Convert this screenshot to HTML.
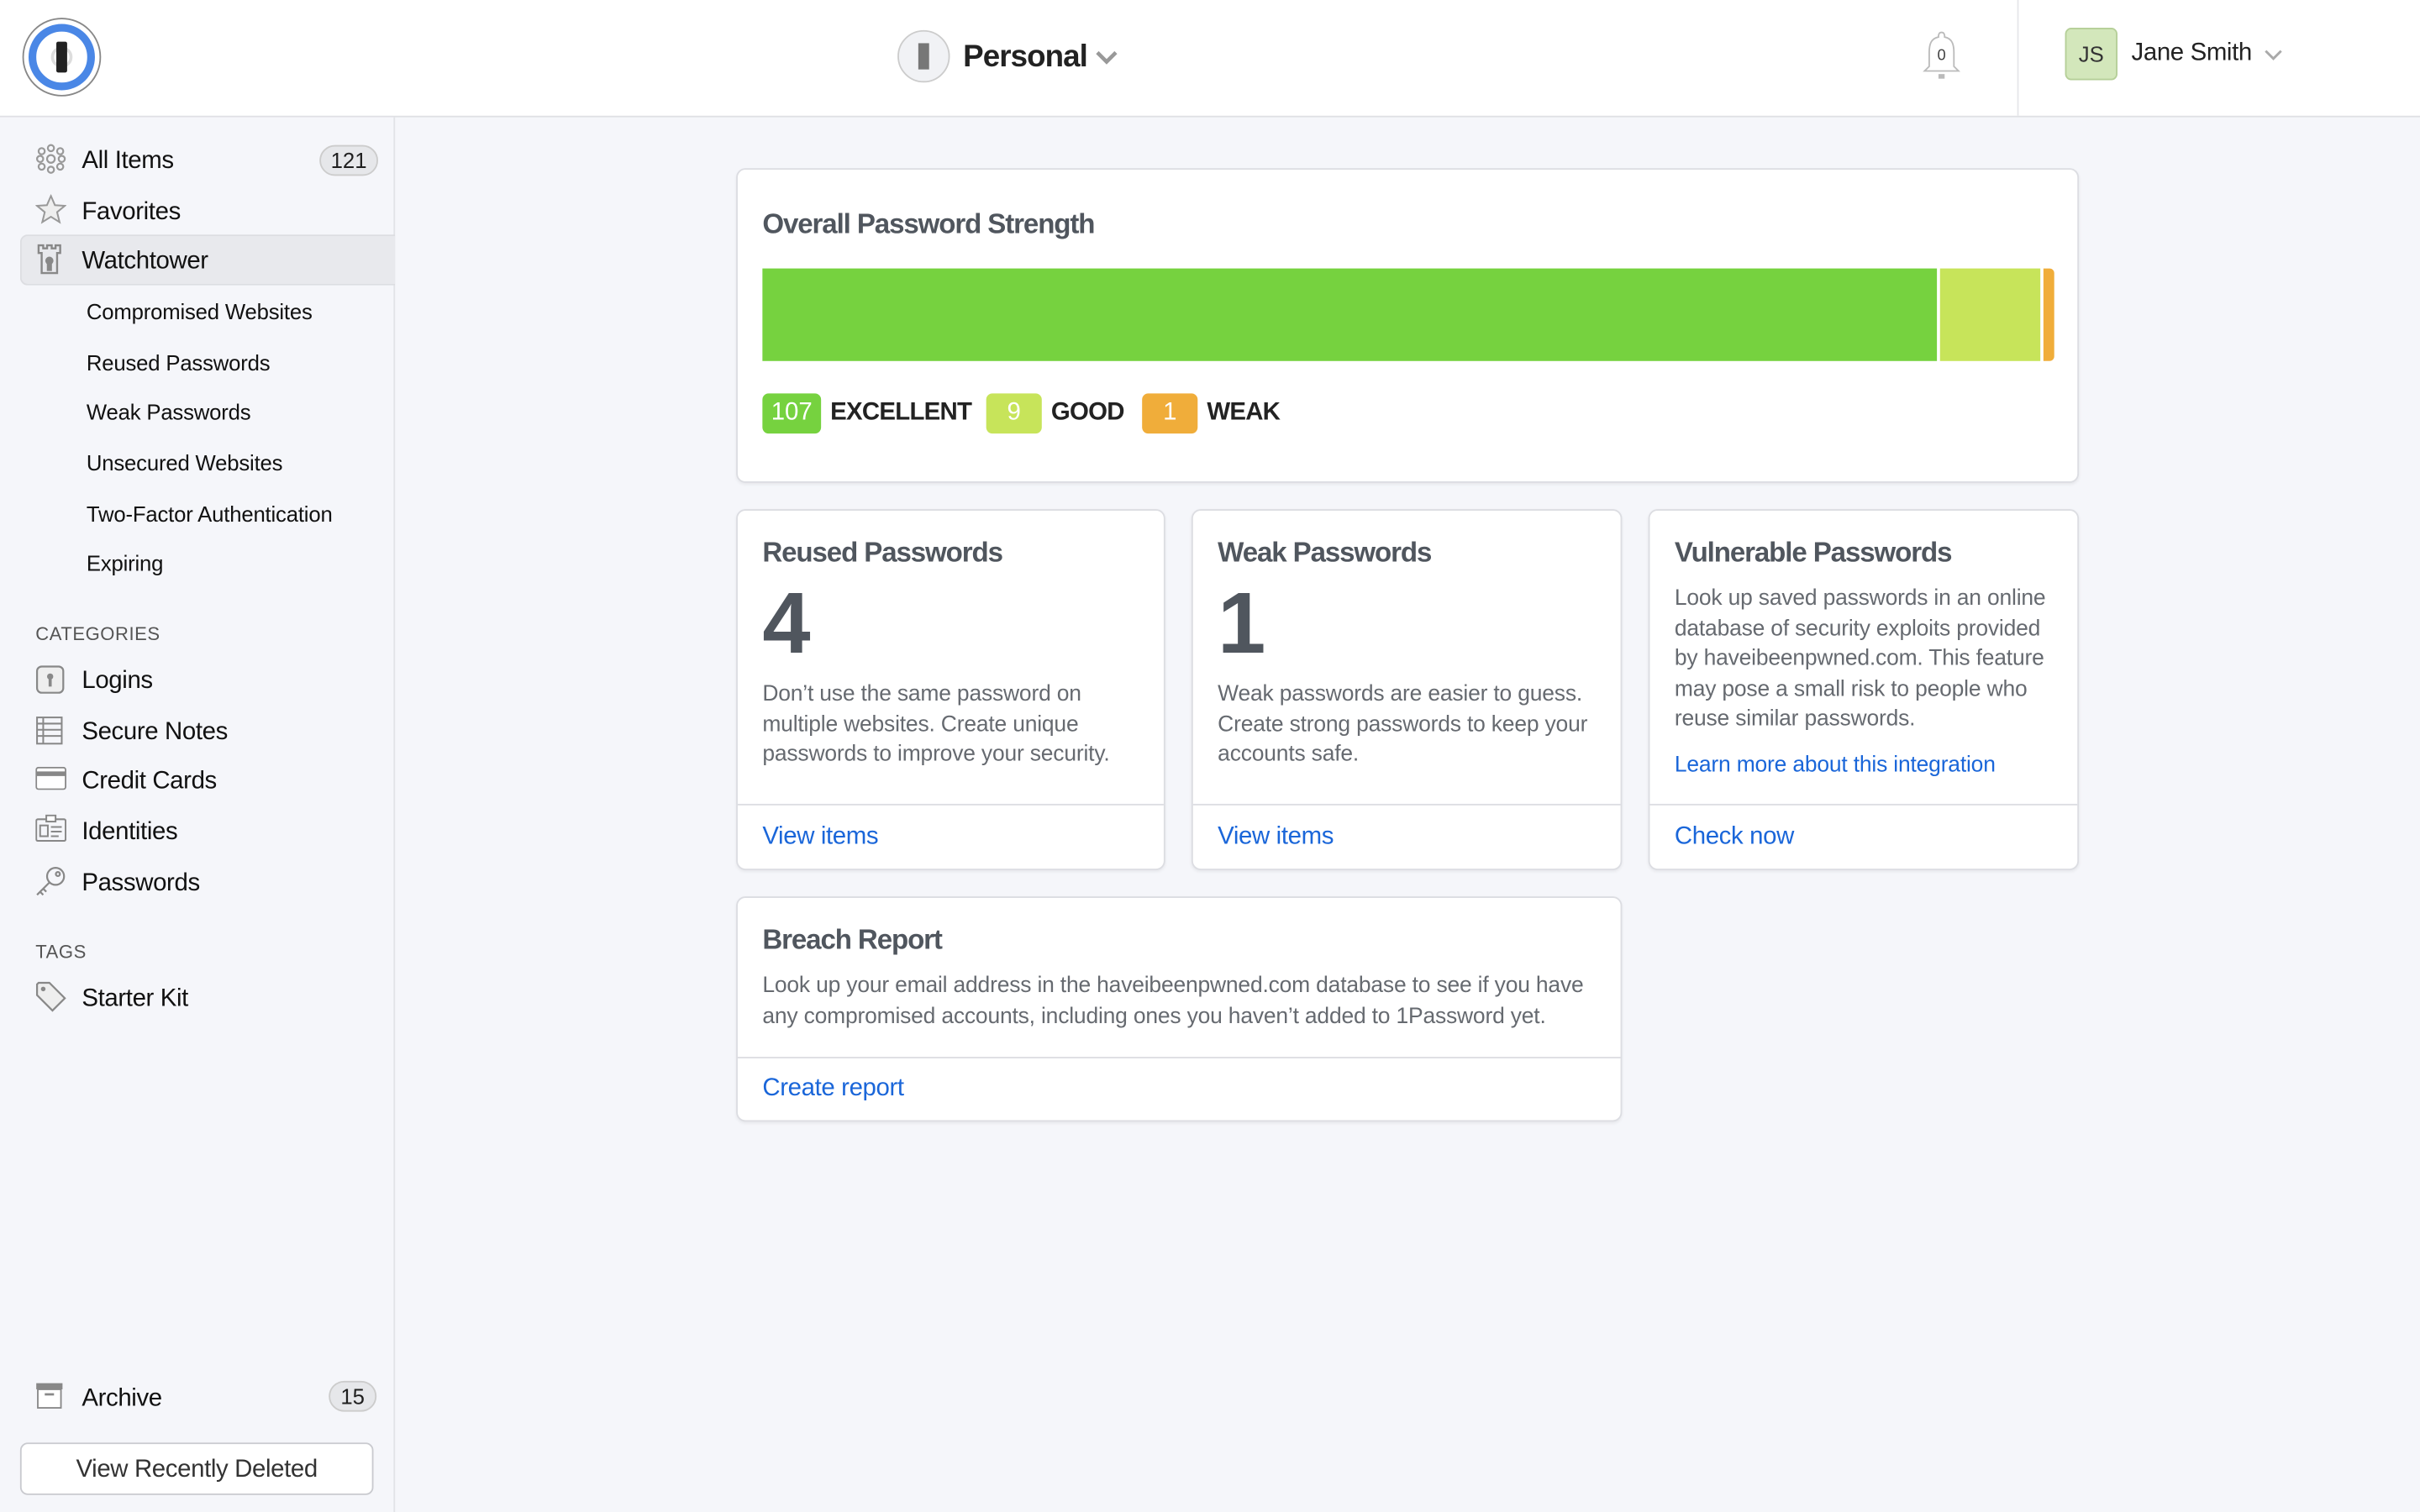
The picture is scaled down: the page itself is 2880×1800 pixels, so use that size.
<!DOCTYPE html>
<html><head><meta charset="utf-8">
<style>
*{box-sizing:border-box;margin:0;padding:0}
html,body{width:2880px;height:1800px;overflow:hidden;background:#f5f6fa}
#w{width:1568px;height:980px;transform:scale(1.836735);transform-origin:0 0;position:relative;font-family:"Liberation Sans",sans-serif;color:#1f1f1f;background:#f5f6fa}
.abs{position:absolute}
#hdr{left:0;top:0;width:1568px;height:76px;background:#fff;border-bottom:1px solid #dfe0e4}
#side{left:0;top:76px;width:256px;height:904px;border-right:1px solid #e2e3e7;background:#f5f6fa}
.it{position:absolute;left:53px;font-size:16px;color:#111;letter-spacing:-.2px}
.sub{position:absolute;left:56px;font-size:14px;color:#111;letter-spacing:-.1px}
.ic{position:absolute;left:23px}
.cap{position:absolute;left:23px;font-size:12px;color:#555;letter-spacing:.3px}
.card{position:absolute;background:#fff;border:1px solid #dcdde2;border-radius:6px;box-shadow:0 1px 2px rgba(0,0,0,.06)}
.ct{position:absolute;left:16px;font-size:18px;font-weight:bold;color:#50565e;letter-spacing:-.6px}
.tx{position:absolute;left:16px;font-size:14.4px;line-height:19.6px;color:#666a70;letter-spacing:-.1px}
.lk{position:absolute;left:16px;font-size:16px;color:#1a66d9;letter-spacing:-.2px}
.dv{position:absolute;left:0;right:0;height:1px;background:#dcdde2}
.big{position:absolute;left:16px;top:40px;font-size:56px;font-weight:bold;color:#50565e}
.bd{position:absolute;top:255px;height:26px;border-radius:4px;color:#fff;font-size:16px;text-align:center;line-height:26px}
.bl{position:absolute;top:259px;font-size:16px;color:#222;font-weight:bold;letter-spacing:-.4px}
</style></head><body><div id="w">
<div id="hdr" class="abs">
 <svg class="abs" style="left:14px;top:11px" width="52" height="52" viewBox="0 0 52 52"><circle cx="26" cy="26" r="25" fill="#fff" stroke="#888" stroke-width="1"/><circle cx="26" cy="26" r="19" fill="#fff" stroke="#4a87e6" stroke-width="5"/><circle cx="26" cy="26" r="6" fill="none" stroke="#ddd" stroke-width="2"/><rect x="22.5" y="16" width="7" height="20" rx="1.2" fill="#222"/></svg>
 <svg class="abs" style="left:581px;top:19px" width="35" height="35" viewBox="0 0 35 35"><circle cx="17.5" cy="17.5" r="16.5" fill="#f1f2f5" stroke="#ccc"/><rect x="14" y="9" width="7" height="17" fill="#777"/></svg>
 <div class="abs" style="left:624px;top:26px;font-size:20px;font-weight:bold;color:#222;letter-spacing:-.5px">Personal</div>
 <svg class="abs" style="left:710px;top:32px" width="14" height="10"><path d="M1 2 L7 8 L13 2" fill="none" stroke="#999" stroke-width="2.5"/></svg>
 <svg class="abs" style="left:1244px;top:19px" width="28" height="34" viewBox="0 0 28 34"><path d="M14 2 C12 2 12 4 12 5 C7 6 6 10 6 15 L6 24 L3 27 L25 27 L22 24 L22 15 C22 10 21 6 16 5 C16 4 16 2 14 2Z" fill="#fff" stroke="#bbb"/><rect x="12" y="29" width="4" height="3" fill="#bbb"/><text x="14" y="20" font-size="10" text-anchor="middle" fill="#444" font-family="Liberation Sans">0</text></svg>
 <div class="abs" style="left:1307px;top:0;width:1px;height:75px;background:#e6e7ea"></div>
 <div class="abs" style="left:1338px;top:18px;width:34px;height:34px;border-radius:4px;background:#d3e7bb;border:1px solid #b5cf98;font-size:14px;text-align:center;line-height:32px;color:#333">JS</div>
 <div class="abs" style="left:1381px;top:26px;font-size:16px;color:#222;letter-spacing:-.2px">Jane Smith</div>
 <svg class="abs" style="left:1467px;top:32px" width="12" height="8"><path d="M1 1 L6 6 L11 1" fill="none" stroke="#aaa" stroke-width="1.6"/></svg>
</div>
<div id="side" class="abs"></div>
<div class="abs" style="left:13px;top:152px;width:243px;height:33px;background:#e8e9ed;border:1px solid #dcdde1;border-right:none;border-radius:5px 0 0 5px"></div>
<svg class="ic" style="top:93px" width="20" height="20" viewBox="0 0 20 20" fill="none" stroke="#999" stroke-width="1.2"><circle cx="10" cy="3" r="2"/><circle cx="4" cy="5" r="2"/><circle cx="16" cy="5" r="2"/><circle cx="3" cy="10" r="2"/><circle cx="10" cy="10" r="2.5"/><circle cx="17" cy="10" r="2"/><circle cx="4" cy="15" r="2"/><circle cx="16" cy="15" r="2"/><circle cx="10" cy="17" r="2"/></svg>
<div class="it" style="top:96px">All Items</div>
<div class="abs" style="left:207px;top:94px;width:38px;height:20px;border-radius:10px;background:#e6e7ea;border:1px solid #ccc;font-size:14px;text-align:center;line-height:18px">121</div>
<svg class="ic" style="top:126px" width="20" height="20" viewBox="0 0 20 20"><path d="M10 1 L12.6 7 L19 7.4 L14 11.5 L15.6 18 L10 14.5 L4.4 18 L6 11.5 L1 7.4 L7.4 7Z" fill="#eee" stroke="#999" stroke-width="1.1"/></svg>
<div class="it" style="top:129px">Favorites</div>
<svg class="ic" style="top:158px;left:24px" width="16" height="20" viewBox="0 0 16 20" fill="none" stroke="#888" stroke-width="1.3"><path d="M1 1 H4 V3 H6.5 V1 H9.5 V3 H12 V1 H15 V6 H13 V19 H3 V6 H1Z"/><circle cx="8" cy="11" r="2" fill="#888"/><rect x="7" y="12" width="2" height="5" fill="#888"/></svg>
<div class="it" style="top:161px">Watchtower</div>
<div class="sub" style="top:194px">Compromised Websites</div>
<div class="sub" style="top:227px">Reused Passwords</div>
<div class="sub" style="top:259px">Weak Passwords</div>
<div class="sub" style="top:292px">Unsecured Websites</div>
<div class="sub" style="top:325px">Two-Factor Authentication</div>
<div class="sub" style="top:357px">Expiring</div>
<div class="cap" style="top:404px">CATEGORIES</div>
<svg class="ic" style="top:431px" width="19" height="19" viewBox="0 0 19 19"><rect x="1" y="1" width="17" height="17" rx="3" fill="#eee" stroke="#888" stroke-width="1.2"/><circle cx="9.5" cy="7.5" r="2" fill="#888"/><rect x="8.5" y="8" width="2" height="6" fill="#888"/></svg>
<div class="it" style="top:433px">Logins</div>
<svg class="ic" style="top:464px" width="18" height="19" viewBox="0 0 18 19" fill="none" stroke="#888" stroke-width="1.1"><rect x="1" y="1" width="16" height="17"/><path d="M1 5H17M1 9H17M1 13H17M5 1V18"/></svg>
<div class="it" style="top:466px">Secure Notes</div>
<svg class="ic" style="top:497px" width="20" height="15" viewBox="0 0 20 15"><rect x="0.5" y="0.5" width="19" height="14" rx="1.5" fill="#fff" stroke="#888"/><rect x="0.5" y="3" width="19" height="3" fill="#888"/></svg>
<div class="it" style="top:498px">Credit Cards</div>
<svg class="ic" style="top:528px" width="20" height="18" viewBox="0 0 20 18" fill="none" stroke="#888" stroke-width="1.1"><rect x="0.5" y="3" width="19" height="14" rx="1"/><rect x="7" y="0.5" width="6" height="4" fill="#fff"/><rect x="3" y="7" width="5" height="7"/><path d="M10 8H17M10 11H17M10 14H15"/></svg>
<div class="it" style="top:531px">Identities</div>
<svg class="ic" style="top:561px" width="20" height="20" viewBox="0 0 20 20" fill="none" stroke="#888" stroke-width="1.2"><circle cx="13" cy="7" r="5.5"/><circle cx="14.5" cy="5.5" r="1.3"/><path d="M9 11 L1 19 M3 17 L5 19 M5 15 L7 17"/></svg>
<div class="it" style="top:564px">Passwords</div>
<div class="cap" style="top:610px">TAGS</div>
<svg class="ic" style="top:636px" width="20" height="20" viewBox="0 0 20 20"><path d="M1 2 V9 L11 19 L19 11 L9 1 H2Z" fill="#eee" stroke="#888" stroke-width="1.2"/><circle cx="5" cy="5" r="1.5" fill="#888"/></svg>
<div class="it" style="top:639px">Starter Kit</div>
<svg class="ic" style="top:896px" width="18" height="17" viewBox="0 0 18 17"><rect x="0.5" y="0.5" width="17" height="4" fill="#888"/><rect x="1.5" y="4.5" width="15" height="12" fill="#fff" stroke="#888"/><rect x="6" y="7" width="6" height="1.5" fill="#888"/></svg>
<div class="it" style="top:898px">Archive</div>
<div class="abs" style="left:213px;top:895px;width:31px;height:20px;border-radius:10px;background:#e6e7ea;border:1px solid #ccc;font-size:14px;text-align:center;line-height:18px">15</div>
<div class="abs" style="left:13px;top:935px;width:229px;height:34px;border:1px solid #c9cacf;border-radius:5px;background:#fff;font-size:16px;text-align:center;line-height:34px;color:#333;letter-spacing:-.2px">View Recently Deleted</div>

<div class="card" style="left:477px;top:109px;width:870px;height:204px">
 <div class="ct" style="top:25px">Overall Password Strength</div>
 <div class="abs" style="left:16px;top:64px;width:761px;height:60px;background:#76d23f"></div>
 <div class="abs" style="left:779px;top:64px;width:65px;height:60px;background:#c7e45a"></div>
 <div class="abs" style="left:846px;top:64px;width:7px;height:60px;background:#f0ad3a;border-radius:0 3px 3px 0"></div>
</div>
<div class="bd" style="left:494px;width:38px;background:#76d23f">107</div>
<div class="bl" style="left:538px">EXCELLENT</div>
<div class="bd" style="left:639px;width:36px;background:#c7e45a">9</div>
<div class="bl" style="left:681px">GOOD</div>
<div class="bd" style="left:740px;width:36px;background:#f0ad3a">1</div>
<div class="bl" style="left:782px">WEAK</div>

<div class="card" style="left:477px;top:330px;width:278px;height:234px">
 <div class="ct" style="top:17px">Reused Passwords</div><div class="big">4</div>
 <div class="tx" style="top:110px;width:236px">Don’t use the same password on multiple websites. Create unique passwords to improve your security.</div>
 <div class="dv" style="top:190px"></div><div class="lk" style="top:203px">View items</div>
</div>
<div class="card" style="left:772px;top:330px;width:279px;height:234px">
 <div class="ct" style="top:17px">Weak Passwords</div><div class="big">1</div>
 <div class="tx" style="top:110px;width:250px">Weak passwords are easier to guess. Create strong passwords to keep your accounts safe.</div>
 <div class="dv" style="top:190px"></div><div class="lk" style="top:203px">View items</div>
</div>
<div class="card" style="left:1068px;top:330px;width:279px;height:234px">
 <div class="ct" style="top:17px">Vulnerable Passwords</div>
 <div class="tx" style="top:48px;width:250px">Look up saved passwords in an online database of security exploits provided by haveibeenpwned.com. This feature may pose a small risk to people who reuse similar passwords.</div>
 <div class="tx" style="top:156px;color:#1a66d9">Learn more about this integration</div>
 <div class="dv" style="top:190px"></div><div class="lk" style="top:203px">Check now</div>
</div>
<div class="card" style="left:477px;top:581px;width:574px;height:146px">
 <div class="ct" style="top:17px">Breach Report</div>
 <div class="tx" style="top:48px;width:545px">Look up your email address in the haveibeenpwned.com database to see if you have any compromised accounts, including ones you haven’t added to 1Password yet.</div>
 <div class="dv" style="top:103px"></div><div class="lk" style="top:115px">Create report</div>
</div>
</div></body></html>
